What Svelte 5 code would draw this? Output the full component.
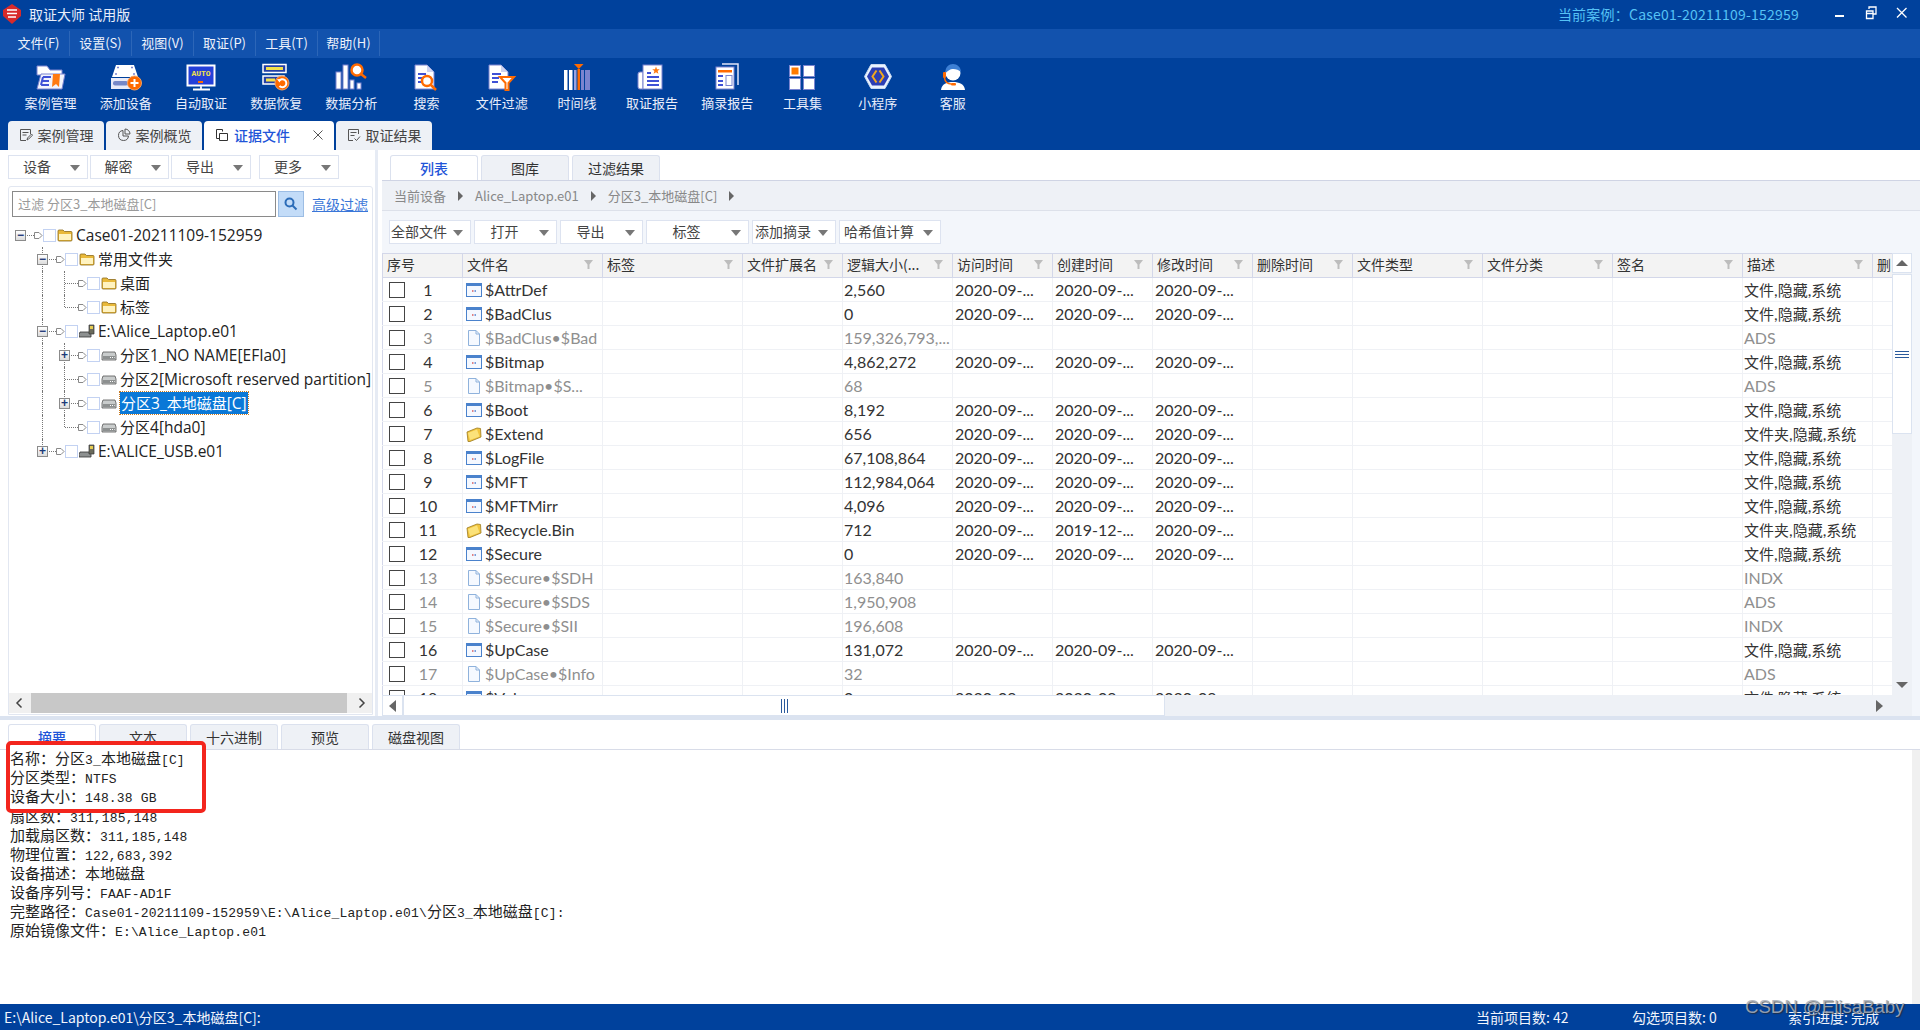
<script>
  const menus = ['文件(F)', '设置(S)', '视图(V)', '取证(P)', '工具(T)', '帮助(H)'];
  const tools = [
    ['folder', '案例管理'], ['device', '添加设备'], ['auto', '自动取证'], ['recover', '数据恢复'],
    ['analysis', '数据分析'], ['search', '搜索'], ['filter', '文件过滤'], ['timeline', '时间线'],
    ['report', '取证报告'], ['excerpt', '摘录报告'], ['toolset', '工具集'], ['mini', '小程序'], ['agent', '客服']
  ];
  const mainTabs = [
    { icon: 'edit', label: '案例管理' },
    { icon: 'pie', label: '案例概览' },
    { icon: 'files', label: '证据文件', active: true },
    { icon: 'check', label: '取证结果' }
  ];

  // level, expander, whether the ancestor line carries on, last child, icon, label
  const tree = [
    { level: 0, exp: '-', guides: [], icon: 'dir', text: 'Case01-20211109-152959', root: true },
    { level: 1, exp: '-', guides: [], icon: 'dir', text: '常用文件夹' },
    { level: 2, guides: [true], icon: 'dir', text: '桌面' },
    { level: 2, guides: [true], icon: 'dir', text: '标签', last: true },
    { level: 1, exp: '-', guides: [], icon: 'image', text: 'E:\\Alice_Laptop.e01' },
    { level: 2, exp: '+', guides: [true], icon: 'hdd', text: '分区1_NO NAME[EFIa0]' },
    { level: 2, guides: [true], icon: 'hdd', text: '分区2[Microsoft reserved partition]' },
    { level: 2, exp: '+', guides: [true], icon: 'hdd', text: '分区3_本地磁盘[C]', selected: true },
    { level: 2, guides: [true], icon: 'hdd', text: '分区4[hda0]', last: true },
    { level: 1, exp: '+', guides: [], icon: 'image', text: 'E:\\ALICE_USB.e01', last: true }
  ];

  const columns = [
    ['序号', 80, false], ['文件名', 140, true], ['标签', 140, true], ['文件扩展名', 100, true],
    ['逻辑大小(...', 110, true], ['访问时间', 100, true], ['创建时间', 100, true], ['修改时间', 100, true],
    ['删除时间', 100, true], ['文件类型', 130, true], ['文件分类', 130, true], ['签名', 130, true],
    ['描述', 130, true], ['删', 60, false]
  ];
  const gridCols = columns.map((c) => c[1] + 'px').join(' ');

  const D = '2020-09-...';
  const F = '文件,隐藏,系统';
  const G = '文件夹,隐藏,系统';
  const rows = [
    ['file', '$AttrDef', '2,560', D, D, D, F],
    ['file', '$BadClus', '0', D, D, D, F],
    ['doc', '$BadClus•$Bad', '159,326,793,...', '', '', '', 'ADS'],
    ['file', '$Bitmap', '4,862,272', D, D, D, F],
    ['doc', '$Bitmap•$S...', '68', '', '', '', 'ADS'],
    ['file', '$Boot', '8,192', D, D, D, F],
    ['dir', '$Extend', '656', D, D, D, G],
    ['file', '$LogFile', '67,108,864', D, D, D, F],
    ['file', '$MFT', '112,984,064', D, D, D, F],
    ['file', '$MFTMirr', '4,096', D, D, D, F],
    ['dir', '$Recycle.Bin', '712', D, '2019-12-...', D, G],
    ['file', '$Secure', '0', D, D, D, F],
    ['doc', '$Secure•$SDH', '163,840', '', '', '', 'INDX'],
    ['doc', '$Secure•$SDS', '1,950,908', '', '', '', 'ADS'],
    ['doc', '$Secure•$SII', '196,608', '', '', '', 'INDX'],
    ['file', '$UpCase', '131,072', D, D, D, F],
    ['doc', '$UpCase•$Info', '32', '', '', '', 'ADS'],
    ['file', '$Volume', '0', D, D, D, F]
  ];

  const boxed = ['名称：分区3_本地磁盘[C]', '分区类型：NTFS', '设备大小：148.38 GB'];
  const details = [
    '扇区数：311,185,148',
    '加载扇区数：311,185,148',
    '物理位置：122,683,392',
    '设备描述：本地磁盘',
    '设备序列号：FAAF-AD1F',
    '完整路径：Case01-20211109-152959\\E:\\Alice_Laptop.e01\\分区3_本地磁盘[C]:',
    '原始镜像文件：E:\\Alice_Laptop.e01'
  ];

  // latin and CJK runs get their own size, the original fonts don't scale alike
  const pieces = (line) => line.match(/[\u3000-\u9fff\uff00-\uffef]+|[^\u3000-\u9fff\uff00-\uffef]+/g) || [];
  const isCjk = (s) => /[\u3000-\u9fff\uff00-\uffef]/.test(s);
</script>

{#snippet mixed(text)}
  {#each pieces(text) as part}<span class:cjk={isCjk(part)}>{part}</span>{/each}
{/snippet}

{#snippet toolIcon(name)}
  <svg class="tool-icon" viewBox="0 0 32 28" width="32" height="28">
    {#if name === 'folder'}
      <path d="M2 3h10l3 4h12v5H2z" fill="#fff" stroke="#7a84d0" />
      <path d="M6 11h24l-3 15H2z" fill="#f3f4fc" stroke="#7a84d0" />
      <path d="M8 14h8M7 18h7M6 22h8M8 14l-2 8" stroke="#3f51d6" stroke-width="2" fill="none" />
      <path d="M18 11h7l-1 13-3-3-4 3z" fill="#ff7a12" />
    {:else if name === 'device'}
      <path d="M6 2h18l4 12H2z" fill="#fff" />
      <path d="M7 4.500h2M21 4.500h2M5 11h2M23 11h2" stroke="#7a84d0" stroke-width="1.500" />
      <rect x="1" y="15" width="27" height="11" fill="#e9ebf8" />
      <rect x="3" y="18" width="15" height="4.500" rx="2" fill="#7688c8" />
      <circle cx="24.500" cy="20" r="7" fill="#ff6a00" stroke="#f3a060" />
      <path d="M24.500 16v8M20.500 20h8" stroke="#fff" stroke-width="2" />
    {:else if name === 'auto'}
      <rect x="2.500" y="2.500" width="27" height="20" fill="#2440d8" stroke="#fff" stroke-width="2" />
      <text x="16" y="13" class="auto" text-anchor="middle">AUTO</text>
      <rect x="13" y="18" width="5" height="2" fill="#ff6a00" />
      <rect x="15" y="23" width="2" height="3" fill="#dfe3f8" />
      <rect x="8" y="25.500" width="17" height="2" fill="#fff" />
    {:else if name === 'recover'}
      <rect x="3" y="1.500" width="23" height="8" fill="#2440a8" stroke="#fff" stroke-width="1.500" />
      <rect x="6" y="4" width="17" height="3" fill="#f3e14a" />
      <rect x="3" y="13" width="21" height="8" fill="#2440a8" stroke="#fff" stroke-width="1.500" />
      <rect x="6" y="15.500" width="9" height="3" fill="#f3e14a" />
      <circle cx="22" cy="20" r="7" fill="#ff6a00" stroke="#f3a060" />
      <path d="M19 18a4 4 0 1 1 0.500 5" stroke="#fff" stroke-width="2" fill="none" />
      <path d="M17 16l4 .5-1.500 3z" fill="#fff" />
    {:else if name === 'analysis'}
      <rect x="1" y="9" width="5" height="17" fill="#fff" stroke="#7a84d0" />
      <rect x="8" y="2" width="5" height="24" fill="#fff" stroke="#7a84d0" />
      <rect x="15" y="17" width="4" height="9" fill="#fff" stroke="#7a84d0" />
      <rect x="22" y="20" width="4" height="6" fill="#fff" stroke="#7a84d0" />
      <circle cx="22" cy="7" r="5.500" fill="#fff" stroke="#ff6a00" stroke-width="2.500" />
      <path d="M26 11l5 4" stroke="#ff6a00" stroke-width="2.500" />
    {:else if name === 'search'}
      <path d="M4 2h12l7 7v17H4z" fill="#fff" stroke="#7a84d0" />
      <path d="M16 2v7h7z" fill="#cdd3f0" />
      <path d="M7 11h8M7 15h5M7 19h4" stroke="#3f51d6" stroke-width="2" />
      <circle cx="16" cy="18" r="5" fill="#fff" stroke="#ff6a00" stroke-width="2.500" />
      <path d="M20 22l5 5" stroke="#ff6a00" stroke-width="2.500" />
    {:else if name === 'filter'}
      <path d="M3 2h12l7 7v17H3z" fill="#fff" stroke="#7a84d0" />
      <path d="M15 2v7h7z" fill="#cdd3f0" />
      <path d="M6 11h9M6 15h7M6 19h6" stroke="#3f51d6" stroke-width="2" />
      <path d="M14 14h14l-5.500 6v7h-3v-7z" fill="#fff" stroke="#ff6a00" stroke-width="2" />
    {:else if name === 'timeline'}
      <rect x="3" y="7" width="3.500" height="20" fill="#fff" />
      <rect x="8" y="7" width="3.500" height="20" fill="#fff" />
      <rect x="13" y="7" width="2.500" height="20" fill="#9aa3e0" />
      <rect x="20" y="7" width="3" height="20" fill="#7a84d0" />
      <rect x="24" y="7" width="5" height="20" fill="#7a84d0" />
      <rect x="16.500" y="6" width="2.500" height="21" fill="#ff6a00" />
      <path d="M13 1h9.500l-4.700 5z" fill="#ff6a00" />
    {:else if name === 'report'}
      <path d="M4 9h3v17H4a2 2 0 0 1-2-2V11a2 2 0 0 1 2-2z" fill="#fff" stroke="#7a84d0" />
      <rect x="7" y="2" width="19" height="24" fill="#fff" stroke="#7a84d0" />
      <path d="M11 10h4M11 14h12M11 18h12M11 22h12" stroke="#3f51d6" stroke-width="2" />
      <path d="M20 3.500l1 2.700 2.800.1-2.200 1.800.8 2.700-2.400-1.600-2.400 1.600.8-2.700-2.200-1.800 2.800-.1z" fill="#ff7a12" />
    {:else if name === 'excerpt'}
      <path d="M11 1h16v21" fill="none" stroke="#dfe3f8" stroke-width="1.500" />
      <rect x="5" y="4" width="18" height="22" fill="#fff" stroke="#7a84d0" />
      <rect x="7" y="7" width="14" height="2.500" fill="#ff6a00" />
      <path d="M7 13h5M7 18h5M7 22h5" stroke="#3f51d6" stroke-width="2" />
      <rect x="15" y="12.500" width="6" height="10" fill="#fff" stroke="#7a84d0" />
    {:else if name === 'toolset'}
      <rect x="3.500" y="2.500" width="11" height="11" fill="#fff" stroke="#7a84d0" />
      <rect x="5.500" y="4.500" width="7" height="7" fill="#ff7a00" />
      <rect x="17.500" y="2.500" width="11" height="11" fill="#fff" stroke="#7a84d0" />
      <rect x="3.500" y="15.500" width="11" height="11" fill="#fff" stroke="#7a84d0" />
      <rect x="17.500" y="15.500" width="11" height="11" fill="#fff" stroke="#7a84d0" />
    {:else if name === 'mini'}
      <path d="M9 1.500h14l6.500 12-6.500 12H9l-6.500-12z" fill="#eaf4ff" stroke="#c8d8f0" />
      <path d="M10 4.500h12l5 9-5 9H10l-5-9z" fill="#2c3fb4" />
      <path d="M14.500 7.500l-4 6 4 6M17.500 7.500l4 6-4 6" fill="none" stroke="#f2a81e" stroke-width="2" />
    {:else if name === 'agent'}
      <path d="M4 27c.5-6 6-8 12-8s11.500 2 12 8z" fill="#fff" />
      <circle cx="16" cy="10" r="7.500" fill="#fff" />
      <path d="M8.500 10C8 4 12 1 16 1s8 3 8 8c-2-2-5-3-8-3-3 0-5 2-7.500 4z" fill="#3d7fd4" />
      <rect x="6" y="9" width="3" height="6" rx="1" fill="#ff6a00" />
      <path d="M7.500 15c.5 4 3 6 7 6" fill="none" stroke="#ff6a00" stroke-width="1.500" />
      <rect x="14" y="20" width="5" height="2.500" rx="1" fill="#ff6a00" />
    {/if}
  </svg>
{/snippet}

{#snippet tabIcon(name)}
  <svg viewBox="0 0 14 14" width="14" height="14" fill="none" stroke="#555" stroke-width="1">
    {#if name === 'edit'}
      <path d="M11.500 6V1.500h-10v11H7M3.500 4.500h6M3.500 7h4" />
      <path d="M8 12l.5-2 4-4 1 1.200-4 4z" />
    {:else if name === 'pie'}
      <path d="M6 2.500a5 5 0 1 0 5.500 5.500H6z" />
      <path d="M8 1a5 5 0 0 1 5 5H8z" />
    {:else if name === 'files'}
      <path d="M1.500 1.500h6v2M1.500 1.500v9h3" stroke="#333" />
      <path d="M4.500 5.500h8v7h-8z" stroke="#333" />
    {:else}
      <path d="M11.500 6V1.500h-10v11H6M3.500 4.500h6M3.500 7.500h4M7.500 10.500l2 2 3.500-4" />
    {/if}
  </svg>
{/snippet}

{#snippet nodeIcon(name)}
  {#if name === 'dir'}
    <svg class="node-icon" viewBox="0 0 16 14" width="16" height="14">
      <path d="M1 3a1 1 0 0 1 1-1h4l1.500 1.500H14a1 1 0 0 1 1 1V12a1 1 0 0 1-1 1H2a1 1 0 0 1-1-1z" fill="#e9b93a" stroke="#8a6a1c" stroke-width=".8" />
      <path d="M2 6h12v6H2z" fill="#fff3c0" />
    </svg>
  {:else if name === 'hdd'}
    <svg class="node-icon" viewBox="0 0 16 14" width="16" height="14">
      <path d="M2 4h12l1 3v5H1V7z" fill="#c9cccc" stroke="#555" stroke-width=".8" />
      <path d="M2 8h12v3H2z" fill="#8d9090" />
      <path d="M9 9.500h1M11 9.500h1M13 9.500h.6" stroke="#fff" />
    </svg>
  {:else}
    <svg class="node-icon" viewBox="0 0 16 14" width="16" height="14">
      <path d="M1 8h10l1 2.500V13H0v-2.500z" fill="#8d9090" stroke="#333" stroke-width=".8" />
      <path d="M10 1h5v9h-5z" fill="#6b6b5c" stroke="#333" stroke-width=".7" />
      <path d="M11 2h3v3h-3z" fill="#e6cc50" />
    </svg>
  {/if}
{/snippet}

{#snippet rowIcon(name)}
  {#if name === 'file'}
    <svg class="row-icon" viewBox="0 0 16 16" width="16" height="16">
      <rect x=".5" y="1.500" width="15" height="13" fill="#f4f8ff" stroke="#4a82cc" />
      <rect x="1" y="2" width="14" height="2" fill="#4a82cc" />
      <path d="M6 9h1.500" stroke="#d95a5a" stroke-width="1.500" />
      <path d="M8.500 9H10" stroke="#4c7fd0" stroke-width="1.500" />
    </svg>
  {:else if name === 'doc'}
    <svg class="row-icon" viewBox="0 0 16 16" width="16" height="16">
      <path d="M2.500 .5h7.500l3.500 3.500v11.500h-11z" fill="#f5f9ff" stroke="#8fb2dc" />
      <path d="M10 .5V4h3.500" fill="none" stroke="#8fb2dc" />
    </svg>
  {:else}
    <svg class="row-icon" viewBox="0 0 16 16" width="16" height="16">
      <path d="M1 6l10-4 3.500.5L15 11l-11 4.500H2z" fill="#f2c53d" stroke="#9a7a20" stroke-width=".8" />
      <path d="M2 7l9-3.500 2.500 7L4 14z" fill="#fbe27a" />
    </svg>
  {/if}
{/snippet}

{#snippet funnel()}
  <svg class="funnel" viewBox="0 0 9 9" width="9" height="9"><path d="M0 0h9L5.500 4.500V9h-2V4.500z" fill="#bdbdbd" /></svg>
{/snippet}

<div class="app">
  <header class="titlebar">
    <svg class="logo" viewBox="0 0 18 20" width="18" height="20">
      <path d="M9 0l9 6v6L9 20 0 12V6z" fill="#d82a2a" />
      <path d="M4 6h10M4 9.500h10M5 13h8" stroke="#fff" stroke-width="1.700" />
    </svg>
    <span class="app-name">取证大师 试用版</span>
    <span class="case-name">当前案例：Case01-20211109-152959</span>
    <div class="win-buttons">
      <svg viewBox="0 0 12 12" width="12" height="12"><path d="M1 9h9" stroke="#fff" stroke-width="2" /></svg>
      <svg viewBox="0 0 12 14" width="12" height="14" fill="none" stroke="#fff" stroke-width="1.300"><path d="M4 3V1h7v7H8" /><path d="M1.500 5h6.500v7.500H1.500zM1.500 7.500H8" /></svg>
      <svg viewBox="0 0 12 12" width="12" height="12"><path d="M1 1l9.500 9.500M10.500 1L1 10.500" stroke="#fff" stroke-width="1.300" /></svg>
    </div>
  </header>

  <nav class="menubar">
    {#each menus as item}
      <span class="menu-item">{item}</span>
    {/each}
  </nav>

  <div class="toolbar">
    {#each tools as [icon, label]}
      <div class="tool">
        {@render toolIcon(icon)}
        <span>{label}</span>
      </div>
    {/each}
  </div>

  <div class="main-tabs">
    {#each mainTabs as tab}
      <div class="main-tab" class:active={tab.active}>
        {@render tabIcon(tab.icon)}
        <span>{tab.label}</span>
        {#if tab.active}
          <svg class="tab-close" viewBox="0 0 10 10" width="10" height="10"><path d="M.5.5l9 9M9.500.5l-9 9" stroke="#555" /></svg>
        {/if}
      </div>
    {/each}
  </div>

  <div class="workspace">
    <aside class="left">
      <div class="left-actions">
        <button class="drop" style="width:80px">设备<i></i></button>
        <button class="drop" style="width:79px">解密<i></i></button>
        <button class="drop" style="width:80px">导出<i></i></button>
        <button class="drop more" style="width:80px">更多<i></i></button>
      </div>
      <div class="tree-panel">
        <div class="filter-row">
          <div class="filter-input">过滤 分区3_本地磁盘[C]</div>
          <div class="filter-btn">
            <svg viewBox="0 0 14 14" width="14" height="14" fill="none" stroke="#2b6cb8" stroke-width="2"><circle cx="5.500" cy="5.500" r="4" /><path d="M8.500 8.500l4 4" /></svg>
          </div>
          <span class="adv-link">高级过滤</span>
        </div>
        <div class="tree">
          {#each tree as node}
            <div class="tree-row">
              {#if !node.root}<span class="cell"></span>{/if}
              {#each node.guides as on}
                <span class="cell" class:vline={on}></span>
              {/each}
              <span class="cell hline" class:vline={!node.root} class:half={node.last}>
                {#if node.exp}
                  <span class="expander">{node.exp === '-' ? '−' : '+'}</span>
                {/if}
              </span>
              <svg class="state" viewBox="0 0 9 9" width="9" height="9"><path d="M.5 1.500h4.500l3 3-3 3H.5z" fill="#fff" stroke="#888" /></svg>
              <span class="tree-check"></span>
              {@render nodeIcon(node.icon)}
              <span class="tree-text" class:selected={node.selected}>{@render mixed(node.text)}</span>
            </div>
          {/each}
        </div>
        <div class="h-scroll-left">
          <svg viewBox="0 0 8 12" width="8" height="12" fill="none" stroke="#444" stroke-width="1.500"><path d="M6.500 1.500L2 6l4.500 4.500" /></svg>
          <div class="thumb-left"></div>
          <svg viewBox="0 0 8 12" width="8" height="12" fill="none" stroke="#444" stroke-width="1.500"><path d="M1.500 1.500L6 6l-4.500 4.500" /></svg>
        </div>
      </div>
    </aside>

    <section class="right">
      <div class="right-tabs">
        <div class="right-tab active">列表</div>
        <div class="right-tab">图库</div>
        <div class="right-tab">过滤结果</div>
      </div>
      <div class="crumbs">
        <span>当前设备</span><i></i><span>Alice_Laptop.e01</span><i></i><span>分区3_本地磁盘[C]</span><i></i>
      </div>
      <div class="list-actions">
        <button class="drop" style="width:82px">全部文件<i></i></button>
        <button class="drop" style="width:83px">打开<i></i></button>
        <button class="drop" style="width:83px">导出<i></i></button>
        <button class="drop" style="width:103px">标签<i></i></button>
        <button class="drop" style="width:84px">添加摘录<i></i></button>
        <button class="drop" style="width:102px">哈希值计算<i></i></button>
      </div>

      <div class="table-wrap">
        <div class="table-body">
          <div class="table-view">
            <div class="thead" style="grid-template-columns:{gridCols}">
              {#each columns as [name, , hasFilter]}
                <div class="th">
                  <span>{name}</span>
                  {#if hasFilter}{@render funnel()}{/if}
                </div>
              {/each}
            </div>
            {#each rows as row, i}
              <div class="tr" class:dim={row[0] === 'doc'} style="grid-template-columns:{gridCols}">
                <div class="td no-cell"><span class="box"></span><span class="num">{i + 1}</span></div>
                <div class="td name-cell">{@render rowIcon(row[0])}<span>{row[1]}</span></div>
                <div class="td"></div>
                <div class="td"></div>
                <div class="td size">{row[2]}</div>
                <div class="td">{row[3]}</div>
                <div class="td">{row[4]}</div>
                <div class="td">{row[5]}</div>
                <div class="td"></div>
                <div class="td"></div>
                <div class="td"></div>
                <div class="td"></div>
                <div class="td size">{@render mixed(row[6])}</div>
                <div class="td"></div>
              </div>
            {/each}
          </div>
          <div class="v-scroll">
            <div class="sb-btn"><span class="tri up"></span></div>
            <div class="v-thumb"><span></span></div>
            <div class="v-rest"></div>
            <div class="sb-btn flat"><span class="tri down"></span></div>
          </div>
        </div>
        <div class="h-scroll">
          <div class="sb-btn wide"><span class="tri left-tri"></span></div>
          <div class="h-thumb"><span></span></div>
          <div class="h-rest"></div>
          <div class="sb-btn wide flat"><span class="tri right-tri"></span></div>
        </div>
      </div>
    </section>
  </div>

  <div class="splitter"></div>

  <div class="bottom-tabs">
    <div class="bottom-tab active">摘要</div>
    <div class="bottom-tab">文本</div>
    <div class="bottom-tab">十六进制</div>
    <div class="bottom-tab">预览</div>
    <div class="bottom-tab">磁盘视图</div>
  </div>

  <div class="details">
    {#each details as line}
      <div class="log-line">{@render mixed(line)}</div>
    {/each}
    <div class="edge"></div>
  </div>

  <footer class="statusbar">
    <span class="status-path">E:\Alice_Laptop.e01\分区3_本地磁盘[C]:</span>
    <span class="st-a">当前项目数: 42</span>
    <span class="st-b">勾选项目数: 0</span>
    <span class="st-c">索引进度: 完成</span>
  </footer>

  <!-- annotation pasted over the screenshot -->
  <div class="callout">
    {#each boxed as line}
      <div class="log-line">{@render mixed(line)}</div>
    {/each}
  </div>
  <div class="watermark">CSDN @ElisaBaby</div>
</div>

<style>
  :global(body) {
    margin: 0;
    background: #fff;
  }

  .app {
    position: relative;
    width: 1920px;
    height: 1030px;
    overflow: hidden;
    display: flex;
    flex-direction: column;
    font-family: 'Noto Sans CJK SC', 'Open Sans', sans-serif;
    font-size: 14px;
    color: #333;
    background: #fff;
  }

  .titlebar {
    height: 29px;
    flex: none;
    box-sizing: border-box;
    display: flex;
    align-items: center;
    background: #00419c;
    color: #fff;
    padding: 0 0 2px 3px;
  }

  .logo {
    margin-right: 8px;
  }

  .app-name {
    font-size: 14px;
    color: #e8eefb;
  }

  .case-name {
    margin-left: auto;
    color: #55c2f5;
    font-size: 14px;
    letter-spacing: 0.22px;
    margin-right: 35px;
  }

  .win-buttons {
    display: flex;
    align-items: center;
    gap: 19px;
    margin-right: 12px;
    margin-top: -2px;
  }

  .menubar {
    height: 29px;
    flex: none;
    display: flex;
    align-items: center;
    background: #1252ad;
    padding-left: 8px;
  }

  .menu-item {
    width: 61px;
    height: 25px;
    line-height: 23px;
    text-align: center;
    font-size: 13px;
    color: #eef3fc;
    border-right: 1px solid #2c66b8;
  }

  .toolbar {
    height: 63px;
    flex: none;
    display: flex;
    background: #00419c;
    padding-left: 13px;
  }

  .tool {
    width: 75.2px;
    flex: none;
    display: flex;
    flex-direction: column;
    align-items: center;
    color: #e9eefb;
    font-size: 13px;
    padding-top: 5px;
    line-height: 18px;
  }

  .tool-icon {
    display: block;
    margin-bottom: 3px;
  }

  .auto {
    font-family: 'Liberation Mono', monospace;
    font-size: 8px;
    font-weight: 700;
    fill: #f3e14a;
  }

  .main-tabs {
    height: 29px;
    flex: none;
    display: flex;
    align-items: flex-end;
    gap: 2px;
    background: #00419c;
    padding-left: 8px;
  }

  .main-tab {
    width: 96px;
    height: 29px;
    box-sizing: border-box;
    display: flex;
    align-items: center;
    justify-content: center;
    gap: 5px;
    background: #eef1f6;
    border-radius: 4px 4px 0 0;
    font-size: 14px;
    color: #444;
    padding-bottom: 2px;
  }

  .main-tab.active {
    width: 130px;
    background: #fff;
    color: #1f55d8;
    font-weight: 500;
    justify-content: flex-start;
    padding-left: 11px;
  }

  .tab-close {
    margin-left: 18px;
  }

  .workspace {
    height: 566px;
    flex: none;
    display: flex;
  }

  .left {
    width: 378px;
    flex: none;
    box-sizing: border-box;
    padding: 5px 0 0 8px;
    border-right: 3px solid #e6ebf4;
  }

  .left-actions {
    display: flex;
    gap: 2px;
    height: 23px;
  }

  .left-actions .more {
    margin-left: 6px;
  }

  .drop {
    position: relative;
    box-sizing: border-box;
    height: 24px;
    padding: 0 22px 2px 0;
    background: #fff;
    border: 1px solid #dde3f0;
    font: inherit;
    font-size: 14px;
    line-height: 18px;
    color: #444;
    text-align: center;
    white-space: nowrap;
  }

  .drop i {
    position: absolute;
    right: 7px;
    top: 9px;
    width: 0;
    height: 0;
    border: 5.5px solid transparent;
    border-top: 6px solid #777;
    border-bottom: 0;
  }

  .tree-panel {
    margin-top: 8px;
    width: 365px;
    height: 529px;
    box-sizing: border-box;
    display: flex;
    flex-direction: column;
    border: 1px solid #e2e7f1;
    border-radius: 3px 3px 0 0;
  }

  .filter-row {
    display: flex;
    align-items: center;
    height: 26px;
    margin: 4px 0 0 3px;
  }

  .filter-input {
    width: 264px;
    height: 26px;
    box-sizing: border-box;
    border: 1px solid #8a8a8a;
    line-height: 24px;
    padding-left: 5px;
    font-size: 13px;
    color: #9a9a9a;
  }

  .filter-btn {
    width: 26px;
    height: 26px;
    margin-left: 2px;
    box-sizing: border-box;
    display: flex;
    align-items: center;
    justify-content: center;
    background: #c3dcf8;
    border: 1px solid #9cbde4;
  }

  .adv-link {
    margin-left: 8px;
    font-size: 14px;
    color: #3a76d8;
    text-decoration: underline;
  }

  .tree {
    flex: 1;
    padding-top: 6px;
    padding-left: 1px;
    overflow: hidden;
    font-family: 'Open Sans', 'Noto Sans CJK SC', sans-serif;
    font-size: 15.5px;
  }

  .tree-row {
    height: 24px;
    display: flex;
    align-items: center;
    white-space: nowrap;
    color: #222;
  }

  .cell {
    position: relative;
    width: 22px;
    height: 24px;
    flex: none;
  }

  .cell.vline::before {
    content: '';
    position: absolute;
    left: 10px;
    top: 0;
    bottom: 0;
    border-left: 1px dotted #777;
  }

  .cell.half::before {
    bottom: 50%;
  }

  .cell.hline::after {
    content: '';
    position: absolute;
    left: 11px;
    right: -2px;
    top: 50%;
    border-top: 1px dotted #777;
  }

  .expander {
    position: absolute;
    z-index: 1;
    left: 5px;
    top: 7px;
    width: 11px;
    height: 11px;
    box-sizing: border-box;
    border: 1px solid #8b8b8b;
    background: linear-gradient(#fff, #dcdcdc);
    color: #1c3a78;
    font: 12px/9px 'Liberation Sans', sans-serif;
    font-weight: 700;
    text-align: center;
  }

  .state {
    flex: none;
    margin-left: 2px;
  }

  .tree-check {
    width: 11px;
    height: 11px;
    flex: none;
    border: 1px solid #c3d2f2;
    margin-right: 1px;
  }

  .node-icon {
    flex: none;
    margin-right: 3px;
  }

  .tree-text {
    line-height: 22px;
    padding: 0;
  }

  .tree-text .cjk {
    font-size: 15px;
  }

  .tree-text.selected {
    background: #0a78d7;
    color: #fff;
    outline: 1px dotted #c87a20;
    margin-left: 0;
    padding: 0 1px;
  }

  .h-scroll-left {
    height: 20px;
    flex: none;
    display: flex;
    align-items: center;
    background: #f0f0f0;
    box-sizing: border-box;
    margin-bottom: 1px;
    padding: 0 6px;
  }

  .thumb-left {
    flex: 1;
    height: 20px;
    margin: 0 11px 0 8px;
    background: #c8c8c8;
  }

  .right {
    flex: 1;
    min-width: 0;
    display: flex;
    flex-direction: column;
    padding-top: 5px;
    padding-left: 4px;
  }

  .right-tabs {
    display: flex;
    gap: 3px;
    height: 26px;
    flex: none;
    box-sizing: border-box;
    padding-left: 8px;
    border-bottom: 1px solid #cfd4e4;
  }

  .right-tab {
    width: 88px;
    height: 25px;
    box-sizing: border-box;
    background: #eef1f6;
    border: 1px solid #dbe1ee;
    border-bottom: 0;
    border-radius: 3px 3px 0 0;
    text-align: center;
    line-height: 25px;
    font-size: 14px;
    color: #333;
  }

  .right-tab.active {
    background: #fff;
    color: #1f55d8;
    font-weight: 500;
  }

  .crumbs {
    height: 30px;
    flex: none;
    box-sizing: border-box;
    display: flex;
    align-items: center;
    gap: 12px;
    padding-left: 12px;
    background: #eef1f6;
    border-bottom: 1px solid #dde1ea;
    color: #888;
    font-size: 13px;
  }

  .crumbs i {
    width: 0;
    height: 0;
    border: 5px solid transparent;
    border-left: 5px solid #666;
    border-right: 0;
  }

  .list-actions {
    height: 39px;
    flex: none;
    box-sizing: border-box;
    display: flex;
    gap: 3px;
    padding: 9px 0 0 7px;
    background: #f3f6fb;
  }

  .table-wrap {
    flex: 1;
    min-height: 0;
    display: flex;
    flex-direction: column;
    padding: 3px 8px 0 0;
    background: #f3f6fb;
  }

  .table-body {
    flex: 1;
    min-height: 0;
    display: flex;
  }

  .table-view {
    width: 1510px;
    flex: none;
    overflow: hidden;
    background: #fff;
  }

  .thead {
    display: grid;
    height: 25px;
    box-sizing: border-box;
    background: #f3f3f3;
    border-top: 1px solid #d3d7e9;
    border-bottom: 1px solid #d3d7e9;
  }

  .th {
    position: relative;
    box-sizing: border-box;
    padding-left: 4px;
    border-left: 1px solid #d3d7e9;
    line-height: 21px;
    font-size: 14px;
    color: #333;
    white-space: nowrap;
    overflow: hidden;
  }

  .funnel {
    position: absolute;
    right: 9px;
    top: 6px;
  }

  .tr {
    display: grid;
    height: 24px;
    box-sizing: border-box;
    border-bottom: 1px solid #eff1f5;
    font-family: 'Lato', 'Noto Sans CJK SC', sans-serif;
    font-size: 16px;
    color: #333;
  }

  .tr.dim {
    color: #8f8f8f;
  }

  .td {
    box-sizing: border-box;
    border-left: 1px solid #eff1f5;
    line-height: 23px;
    white-space: nowrap;
    overflow: hidden;
    padding-left: 2px;
  }

  .td .cjk {
    font-size: 15px;
  }

  .td.size {
    padding-left: 1px;
  }

  .no-cell {
    display: flex;
    align-items: center;
    padding-left: 6px;
    border-left: 1px solid #d3d7e9;
  }

  .box {
    width: 16px;
    height: 16px;
    box-sizing: border-box;
    flex: none;
    border: 1.5px solid #444;
  }

  .num {
    width: 44px;
    margin-left: 1px;
    text-align: center;
  }

  .name-cell {
    display: flex;
    align-items: center;
    padding-left: 3px;
  }

  .row-icon {
    flex: none;
    margin-right: 3px;
  }

  .v-scroll {
    width: 20px;
    flex: none;
    display: flex;
    flex-direction: column;
    background: #eef1f6;
  }

  .sb-btn {
    height: 20px;
    flex: none;
    box-sizing: border-box;
    display: flex;
    align-items: center;
    justify-content: center;
    background: #fff;
    border: 1px solid #dbe3f0;
  }

  .sb-btn.flat {
    background: #eef1f6;
    border-color: transparent;
  }

  .sb-btn.wide {
    width: 21px;
    height: 21px;
  }

  .v-thumb {
    height: 160px;
    margin-top: 1px;
    box-sizing: border-box;
    display: flex;
    align-items: center;
    justify-content: center;
    background: #fff;
    border: 1px solid #dbe3f0;
  }

  .v-thumb span {
    width: 14px;
    height: 5px;
    border-top: 1px solid #2a5a9c;
    border-bottom: 1px solid #2a5a9c;
    position: relative;
  }

  .v-thumb span::after {
    content: '';
    position: absolute;
    left: 0;
    right: 0;
    top: 2px;
    border-top: 1px solid #2a5a9c;
  }

  .v-rest,
  .h-rest {
    flex: 1;
  }

  .tri {
    width: 0;
    height: 0;
    border: 5px solid transparent;
  }

  .tri.up {
    border-top: 0;
    border-bottom: 6px solid #666;
    border-left-width: 6px;
    border-right-width: 6px;
  }

  .tri.down {
    border-bottom: 0;
    border-top: 6px solid #666;
    border-left-width: 6px;
    border-right-width: 6px;
  }

  .tri.left-tri {
    border-left: 0;
    border-right: 7px solid #666;
    border-top-width: 6px;
    border-bottom-width: 6px;
  }

  .tri.right-tri {
    border-right: 0;
    border-left: 7px solid #666;
    border-top-width: 6px;
    border-bottom-width: 6px;
  }

  .h-scroll {
    height: 21px;
    flex: none;
    display: flex;
    background: #eef1f6;
    padding-right: 22px;
  }

  .h-thumb {
    width: 762px;
    box-sizing: border-box;
    display: flex;
    align-items: center;
    justify-content: center;
    background: #fff;
    border: 1px solid #dbe3f0;
  }

  .h-thumb span {
    width: 5px;
    height: 14px;
    border-left: 1px solid #2a5a9c;
    border-right: 1px solid #2a5a9c;
    position: relative;
  }

  .h-thumb span::after {
    content: '';
    position: absolute;
    top: 0;
    bottom: 0;
    left: 2px;
    border-left: 1px solid #2a5a9c;
  }

  .splitter {
    height: 4px;
    flex: none;
    background: #dbe3f0;
  }

  .bottom-tabs {
    height: 30px;
    flex: none;
    box-sizing: border-box;
    display: flex;
    gap: 3px;
    align-items: flex-end;
    padding-left: 8px;
    border-bottom: 1px solid #d8dce8;
  }

  .bottom-tab {
    width: 88px;
    height: 25px;
    box-sizing: border-box;
    background: #eef1f6;
    border: 1px solid #dbe1ee;
    border-bottom: 0;
    border-radius: 3px 3px 0 0;
    text-align: center;
    line-height: 24px;
    font-size: 14px;
    color: #333;
  }

  .bottom-tab.active {
    background: #fff;
    color: #1f55d8;
    font-weight: 500;
  }

  .details {
    position: relative;
    height: 254px;
    flex: none;
    box-sizing: border-box;
    padding: 56px 0 0 10px;
  }

  .edge {
    position: absolute;
    top: 0;
    right: 0;
    bottom: 0;
    width: 8px;
    background: #f0f0f0;
  }

  .log-line {
    height: 19px;
    line-height: 19px;
    white-space: pre;
    font-family: 'Liberation Mono', monospace;
    font-size: 13px;
    letter-spacing: 0.15px;
    color: #222;
  }

  .log-line .cjk {
    font-family: 'Noto Sans CJK SC', sans-serif;
    font-size: 15px;
    letter-spacing: 0;
  }

  .statusbar {
    height: 26px;
    flex: none;
    position: relative;
    background: #00419c;
    color: #f2f5fc;
    font-size: 14px;
    line-height: 26px;
    padding-left: 4px;
  }

  .statusbar span {
    white-space: nowrap;
  }

  .st-a,
  .st-b,
  .st-c {
    position: absolute;
    top: 0;
  }

  .st-a {
    left: 1476px;
  }

  .st-b {
    left: 1632px;
  }

  .st-c {
    left: 1788px;
  }

  .callout {
    position: absolute;
    z-index: 3;
    left: 6px;
    top: 741px;
    width: 200px;
    height: 72px;
    box-sizing: border-box;
    border: 4px solid #f3251d;
    border-radius: 5px;
    background: #fff;
    padding: 3px 0 0 0;
  }

  .watermark {
    position: absolute;
    z-index: 4;
    left: 1745px;
    top: 995px;
    font-family: 'Liberation Sans', sans-serif;
    font-size: 18.6px;
    line-height: 24px;
    color: rgba(170, 176, 186, 0.85);
    text-shadow: 1px 1px 1px rgba(40, 40, 40, 0.7);
    white-space: nowrap;
  }
</style>
